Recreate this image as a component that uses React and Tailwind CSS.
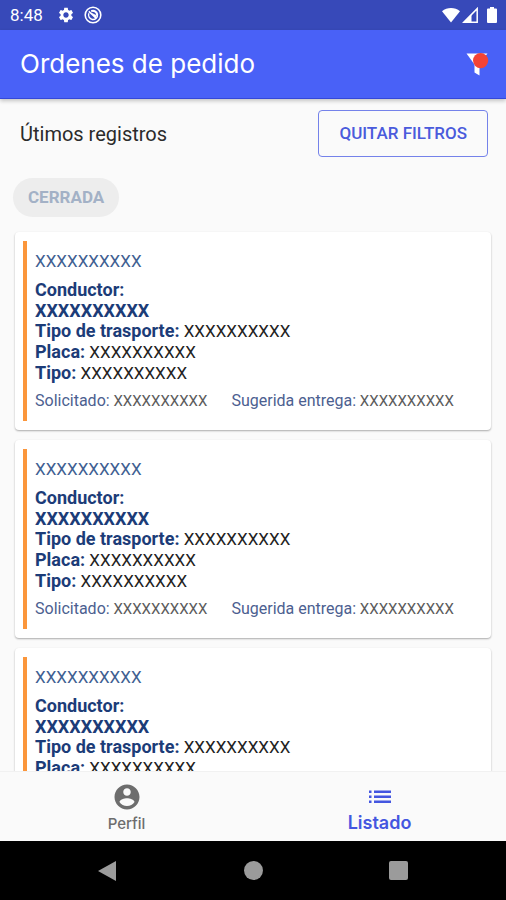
import React from "react";

const PLACEHOLDER = "XXXXXXXXXX";

function GearIcon() {
  return (
    <svg viewBox="0 0 24 24" className="size-[18px]" fill="currentColor" aria-hidden="true">
      <path d="M19.14 12.94c.04-.3.06-.61.06-.94 0-.32-.02-.64-.07-.94l2.03-1.58c.18-.14.23-.41.12-.61l-1.92-3.32c-.12-.22-.37-.29-.59-.22l-2.39.96c-.5-.38-1.03-.7-1.62-.94l-.36-2.54c-.04-.24-.24-.41-.48-.41h-3.84c-.24 0-.43.17-.47.41l-.36 2.54c-.59.24-1.13.57-1.62.94l-2.39-.96c-.22-.08-.47 0-.59.22L2.74 8.87c-.12.21-.08.47.12.61l2.03 1.58c-.05.3-.09.63-.09.94s.02.64.07.94l-2.03 1.58c-.18.14-.23.41-.12.61l1.92 3.32c.12.22.37.29.59.22l2.39-.96c.5.38 1.03.7 1.62.94l.36 2.54c.05.24.24.41.48.41h3.84c.24 0 .44-.17.47-.41l.36-2.54c.59-.24 1.13-.56 1.62-.94l2.39.96c.22.08.47 0 .59-.22l1.92-3.32c.12-.22.07-.47-.12-.61l-2.01-1.58zM12 15.6c-1.98 0-3.6-1.62-3.6-3.6s1.62-3.6 3.6-3.6 3.6 1.62 3.6 3.6-1.62 3.6-3.6 3.6z" />
    </svg>
  );
}

function SyncBadgeIcon() {
  return (
    <svg viewBox="0 0 18 18" className="size-[18px]" fill="none" stroke="currentColor" aria-hidden="true">
      <circle cx="9" cy="9" r="7.8" strokeWidth="1.6" />
      <path d="M4.9 7.2A4.5 4.5 0 1 0 7.2 4.9" strokeWidth="1.4" />
      <path d="M4.8 5.4L12.2 12.2M7.4 5.2A4.5 4.5 0 0 1 13 9.6" strokeWidth="1.5" />
      <path d="M7 7L12.5 9.5L11.5 12Z" fill="currentColor" strokeWidth="0.6" />
    </svg>
  );
}

function StatusBar() {
  return (
    <div className="flex h-[30px] shrink-0 items-center justify-between bg-[#3749b9] pr-2 pl-[10px] text-white">
      <div className="flex items-center">
        <span className="w-[47px] text-[17px] leading-5">8:48</span>
        <GearIcon />
        <span className="ml-[9px]">
          <SyncBadgeIcon />
        </span>
      </div>
      <div className="flex items-center gap-[2px]">
        <svg viewBox="0 0 18 16" className="h-4 w-[18px]" fill="currentColor" aria-hidden="true">
          <path d="M9 15.5L0 4.2C5 0 13 0 18 4.2Z" />
        </svg>
        <svg viewBox="0 0 16 16" className="size-4" aria-hidden="true">
          <path d="M1.8 15.2H15.2V1.6Z" fill="none" stroke="currentColor" strokeWidth="1.5" />
          <path d="M1 15.5L9.5 7V15.5Z" fill="currentColor" />
        </svg>
        <svg viewBox="0 0 12 18" className="ml-[6px] h-[18px] w-3" fill="currentColor" aria-hidden="true">
          <path d="M4 1H8V2.5H10Q11 2.5 11 3.5V16Q11 17 10 17H2Q1 17 1 16V3.5Q1 2.5 2 2.5H4Z" />
        </svg>
      </div>
    </div>
  );
}

function Header() {
  return (
    <header className="z-10 flex h-[69px] shrink-0 items-center justify-between border-b border-[#3448d8] bg-[#4961f7] pr-[17px] pl-5 text-white shadow-[0_2px_4px_rgba(0,0,0,0.22)]">
      <h1 className="font-[Inter,sans-serif] text-[26px] leading-8">Ordenes de pedido</h1>
      <button type="button" aria-label="Filtros" className="block">
        <svg viewBox="0 0 24 24" className="size-6" aria-hidden="true">
          <path d="M1.5 1.5H22.5L14.5 11V23.5L9.5 20.5V12.5Z" fill="#fff" />
          <circle cx="15.6" cy="8.6" r="7.6" fill="#f44336" />
        </svg>
      </button>
    </header>
  );
}

function Detail({ label }) {
  return (
    <p>
      <b className="text-[18px] leading-none font-bold text-[#1c3c78]">{label}</b> {PLACEHOLDER}
    </p>
  );
}

function DateNote({ label }) {
  return (
    <p>
      <span className="text-[16px] leading-none text-[#4c6090]">{label}</span> {PLACEHOLDER}
    </p>
  );
}

function OrderCard() {
  return (
    <li className="flex gap-2 rounded-[4px] bg-white px-2 py-[9px] shadow-[0_1px_2px_rgba(0,0,0,0.32)]">
      <div className="w-1 shrink-0 bg-[#fb963b]" />
      <div className="min-w-0 flex-1 py-[10px]">
        <p className="text-[17px] leading-5 text-[#3f5f92]">{PLACEHOLDER}</p>
        <div className="mt-2 text-[17px] leading-[21px] text-[#222]">
          <p className="text-[18px] leading-[21px] font-bold text-[#1c3c78]">
            Conductor:
            <br />
            {PLACEHOLDER}
          </p>
          <Detail label="Tipo de trasporte:" />
          <Detail label="Placa:" />
          <Detail label="Tipo:" />
        </div>
        <div className="mt-[7px] flex gap-6 text-[15px] leading-5 whitespace-nowrap text-[#5c5c5c]">
          <DateNote label="Solicitado:" />
          <DateNote label="Sugerida entrega:" />
        </div>
      </div>
    </li>
  );
}

function BottomNav() {
  return (
    <nav className="grid h-[70px] shrink-0 grid-cols-2 border-t border-[#f1f1f1] bg-[#fafafa] font-[Inter,sans-serif]">
      <button type="button" className="flex flex-col items-center pt-[10px] text-[#6d6d6d]">
        <svg viewBox="0 0 24 24" className="size-[30px]" fill="currentColor" aria-hidden="true">
          <path d="M12 2C6.48 2 2 6.48 2 12s4.48 10 10 10 10-4.48 10-10S17.52 2 12 2zm0 3c1.66 0 3 1.34 3 3s-1.34 3-3 3-3-1.34-3-3 1.34-3 3-3zm0 14.2c-2.5 0-4.71-1.28-6-3.22.03-1.99 4-3.08 6-3.08 1.99 0 5.97 1.09 6 3.08-1.29 1.94-3.5 3.22-6 3.22z" />
        </svg>
        <span className="mt-[2px] text-[15px] leading-5 font-medium">Perfil</span>
      </button>
      <button type="button" aria-current="page" className="flex flex-col items-center pt-[10px] text-[#4456e0]">
        <svg viewBox="0 0 30 30" className="size-[30px]" fill="currentColor" aria-hidden="true">
          <path d="M4 8.5h2.5v2.5H4zM4 13.5h2.5v2.5H4zM4 18.5h2.5v2.5H4zM9 8.5h17v2.5H9zM9 13.5h17v2.5H9zM9 18.5h17v2.5H9z" />
        </svg>
        <span className="text-[18px] leading-[22px] font-semibold">Listado</span>
      </button>
    </nav>
  );
}

function SystemNav() {
  return (
    <div className="flex h-[59px] shrink-0 items-center justify-center gap-[126px] bg-black text-[#9b9b9b]">
      <button type="button" aria-label="Atrás">
        <svg viewBox="0 0 20 22" className="h-[22px] w-5" fill="currentColor" aria-hidden="true">
          <path d="M18 1V21L0 11Z" />
        </svg>
      </button>
      <button type="button" aria-label="Inicio">
        <span className="block size-[19px] rounded-full bg-current" />
      </button>
      <button type="button" aria-label="Recientes">
        <span className="block size-[19px] rounded-[2px] bg-current" />
      </button>
    </div>
  );
}

export default function App() {
  return (
    <div className="flex h-screen flex-col overflow-hidden bg-[#fafafa] font-[Roboto,sans-serif]">
      <StatusBar />
      <Header />
      <main className="min-h-0 flex-1 overflow-y-auto [scrollbar-width:none]">
        <div className="flex items-center justify-between pt-[11px] pr-[18px] pl-5">
          <h2 className="text-[20px] leading-6 text-[#2b2b2b]">Útimos registros</h2>
          <button
            type="button"
            className="h-[47px] rounded-[4px] border border-[#7482ea] px-5 text-[17px] font-medium text-[#4a5bdc]"
          >
            QUITAR FILTROS
          </button>
        </div>
        <div className="mt-[21px] px-[13px]">
          <span className="inline-flex h-[39px] items-center rounded-full bg-[#ededed] px-[15px] align-top text-[17px] font-bold text-[#a3b1c6]">
            CERRADA
          </span>
        </div>
        <ul className="mt-[15px] flex flex-col gap-[10px] px-[15px]">
          <OrderCard />
          <OrderCard />
          <OrderCard />
        </ul>
      </main>
      <BottomNav />
      <SystemNav />
    </div>
  );
}
